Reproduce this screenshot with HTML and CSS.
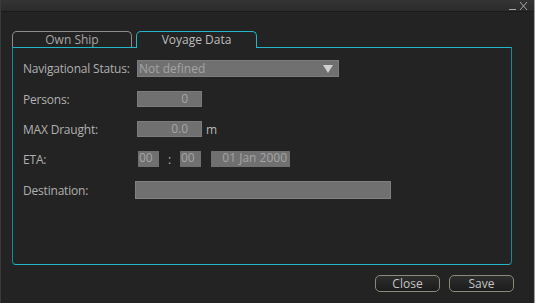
FILE: index.html
```html
<!DOCTYPE html>
<html lang="en">
<head>
    <meta charset="UTF-8">
    <title>Voyage Data</title>
    <link rel="stylesheet" href="styles.css">
</head>
<body>

<div class="window">
    <div class="titlebar">
        <svg class="ctrls" width="22" height="11" viewBox="0 0 22 11">
            <path d="M1 9.5 H8" stroke="#a8a8a8" stroke-width="1"/>
            <path d="M12 2 L19 10 M19 2 L12 10" stroke="#a8a8a8" stroke-width="1"/>
        </svg>
    </div>

    <div class="tabs">
        <div class="tab">Own Ship</div>
        <div class="tab active">Voyage Data</div>
    </div>

    <div class="panel">
        <div class="row">
            <label>Navigational Status:</label>
            <div class="field select">
                <span>Not defined</span>
                <span class="arrow"></span>
            </div>
        </div>
        <div class="row">
            <label>Persons:</label>
            <div class="field num">0</div>
        </div>
        <div class="row">
            <label>MAX Draught:</label>
            <div class="field num">0.0</div>
            <span class="unit">m</span>
        </div>
        <div class="row">
            <label>ETA:</label>
            <div class="field time">00</div>
            <span class="colon">:</span>
            <div class="field time">00</div>
            <div class="field date">01 Jan 2000</div>
        </div>
        <div class="row">
            <label>Destination:</label>
            <div class="field dest"></div>
        </div>
    </div>

    <div class="footer">
        <button class="btn">Close</button>
        <button class="btn">Save</button>
    </div>
</div>

</body>
</html>
```

FILE: styles.css
```css
body {
    margin: 0;
    background: #232323;
    font-family: "Open Sans", "Noto Sans", sans-serif;
    font-size: 12px;
    color: #b4b4b4;
}
.window {
    width: 533px;
    height: 303px;
    background: #232323;
    border-left: 1px solid #3a3a3a;
    border-right: 1px solid #a0a0a0;
    display: flex;
    flex-direction: column;
}
.titlebar {
    height: 11px;
    background: linear-gradient(#343434, #2b2b2b);
    border-bottom: 1px solid #1b1b1b;
    display: flex;
    justify-content: flex-end;
    align-items: center;
    padding-right: 4px;
}
.ctrls {
    display: block;
}
.tabs {
    display: flex;
    margin: 19px 0 0 11px;
    gap: 4px;
    height: 16px;
}
.tab {
    width: 118px;
    height: 15px;
    border: 1px solid #8c8c8c;
    border-bottom: none;
    border-radius: 5px 5px 0 0;
    text-align: center;
    line-height: 15px;
    font-size: 12px;
    color: #a6a6a6;
}
.tab.active {
    width: 119px;
    border-color: #22b6c6;
    height: 16px;
    margin-bottom: -1px;
    background: #232323;
    position: relative;
    z-index: 1;
    color: #bdbdbd;
}
.panel {
    margin-left: 11px;
    width: 500px;
    border: 1px solid #22b6c6;
    border-left-color: #188b97;
    border-right-color: #188b97;
    border-radius: 0 0 4px 4px;
    padding: 12px 0 0 10px;
    box-sizing: border-box;
    height: 218px;
    display: flex;
    flex-direction: column;
    gap: 13px;
}
.row {
    display: flex;
    align-items: center;
    height: 17px;
}
.row:nth-child(2), .row:nth-child(3), .row:nth-child(4) {
    height: 16px;
    margin-top: 1px;
}
.row:nth-child(5) {
    height: 18px;
    margin-top: 1px;
}
.row label {
    width: 114px;
    color: #b0b0b0;
    letter-spacing: -0.2px;
}
.field {
    height: 100%;
    box-sizing: border-box;
    background: #707070;
    border: 1px solid #7c7c7c;
    color: #a4a4a4;
    line-height: 14px;
}
.select {
    width: 202px;
    display: flex;
    justify-content: space-between;
    align-items: center;
    padding: 0 5px 0 1px;
}
.arrow {
    width: 0;
    height: 0;
    border-left: 5px solid transparent;
    border-right: 5px solid transparent;
    border-top: 8px solid #cfcfcf;
}
.num {
    width: 65px;
    text-align: right;
    padding-right: 13px;
}
.unit {
    margin-left: 4px;
    color: #b8b8b8;
}
.time {
    width: 21px;
    padding-left: 1px;
    border: none;
}
.row .time:nth-of-type(1) {
    margin-left: 1px;
}
.colon {
    width: 21px;
    text-align: center;
}
.date {
    width: 79px;
    margin-left: 10px;
    border: none;
    text-align: right;
    padding-right: 3px;
}
.dest {
    width: 256px;
    margin-left: -2px;
    border-color: #808080;
}
.footer {
    display: flex;
    justify-content: flex-end;
    gap: 9px;
    margin-top: 10px;
    padding-right: 20px;
}
.btn {
    width: 65px;
    height: 17px;
    padding: 0;
    border: 1px solid #8a8a78;
    border-radius: 5px;
    background: linear-gradient(#2e2e2e, #1c1c1c);
    color: #c4c4c4;
    font-family: "Open Sans", "Noto Sans", sans-serif;
    font-size: 12px;
    line-height: 14px;
}
```
